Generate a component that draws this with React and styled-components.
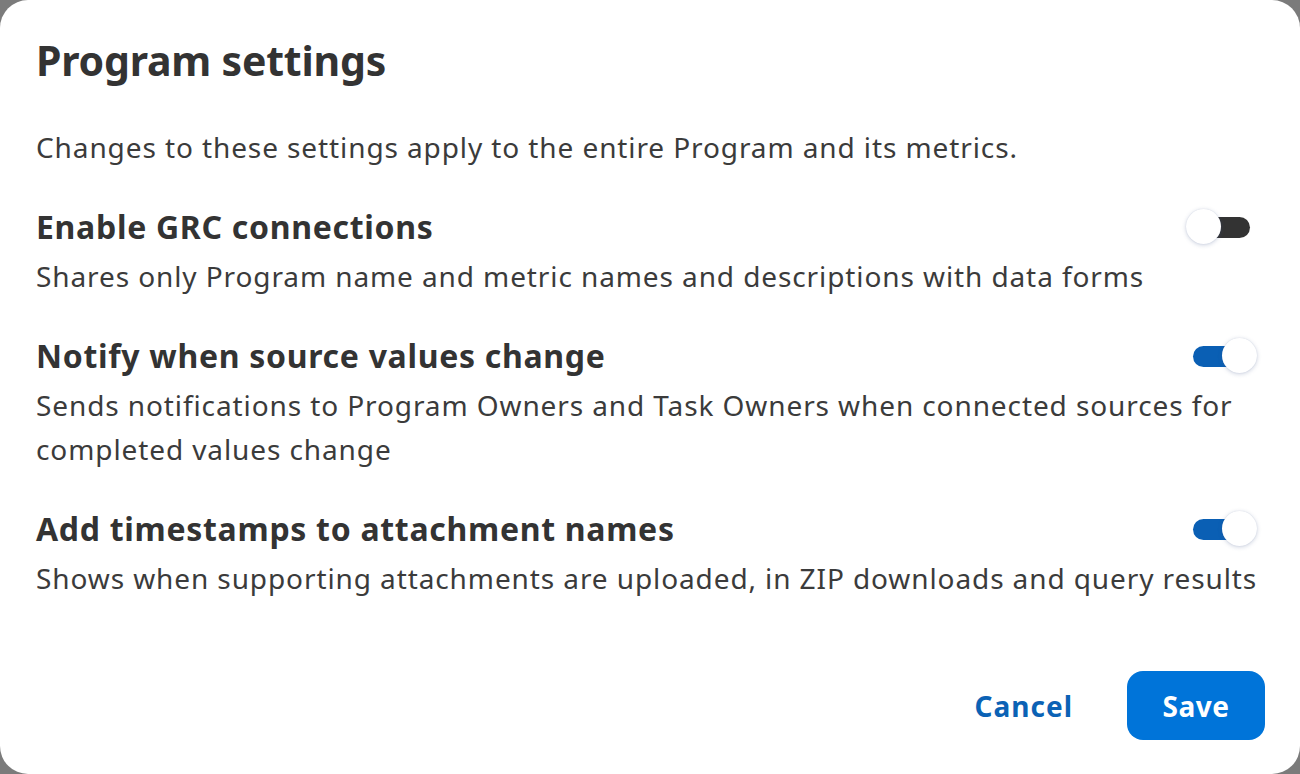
import React, { useState } from "react";
import styled, { createGlobalStyle } from "styled-components";

const Global = createGlobalStyle`
  html, body { margin: 0; padding: 0; background: #7b7b7b; }
  body { font-family: "Noto Sans", "Liberation Sans", sans-serif; -webkit-font-smoothing: antialiased; }
  * { box-sizing: border-box; }
`;

const Card = styled.div`
  width: 1300px;
  height: 774px;
  background: #ffffff;
  border-radius: 28px;
  padding: 32px 35px 34px 36px;
  display: flex;
  flex-direction: column;
  color: #3b3b3b;
`;

const Title = styled.h1`
  margin: 0 0 37px;
  font-size: 41px;
  line-height: 56px;
  font-weight: 700;
  color: #333333;
  letter-spacing: -0.2px;
`;

const Body = styled.p`
  margin: 0;
  font-size: 28px;
  line-height: 44px;
  font-weight: 400;
  letter-spacing: 0.9px;
  color: #3b3b3b;
`;

const Intro = styled(Body)`
  margin-bottom: 38px;
`;

const Setting = styled.div`
  display: grid;
  grid-template-columns: 1fr auto;
  column-gap: 16px;
  row-gap: 7px;
  margin-bottom: 38px;
  &:last-of-type { margin-bottom: 0; }
`;

const Heading = styled.h2`
  margin: 0;
  font-size: 32px;
  line-height: 40px;
  font-weight: 700;
  letter-spacing: 0.7px;
  color: #333333;
`;

const Desc = styled(Body)`
  grid-column: 1 / -1;
`;

const SwitchButton = styled.button`
  position: relative;
  align-self: center;
  width: 64px;
  height: 36px;
  padding: 0;
  border: 0;
  background: transparent;
  cursor: pointer;
  margin-right: ${(p) => (p.$on ? "8px" : "15px")};
`;

const Track = styled.span`
  position: absolute;
  top: 8px;
  height: 21px;
  width: 46px;
  border-radius: 11px;
  background: ${(p) => (p.$on ? "#0a5fb4" : "#333333")};
  ${(p) => (p.$on ? "left: 0;" : "right: 0;")}
`;

const Knob = styled.span`
  position: absolute;
  top: 0;
  width: 35px;
  height: 35px;
  border-radius: 50%;
  background: #ffffff;
  box-shadow: 0 1px 4px rgba(70, 90, 140, 0.28), 0 0 1px rgba(70, 90, 140, 0.2);
  ${(p) => (p.$on ? "right: 0;" : "left: 0;")}
`;

function Switch({ on, onToggle }) {
  return (
    <SwitchButton $on={on} role="switch" aria-checked={on} onClick={onToggle}>
      <Track $on={on} />
      <Knob $on={on} />
    </SwitchButton>
  );
}

const Footer = styled.div`
  margin-top: auto;
  display: flex;
  justify-content: flex-end;
  align-items: center;
  gap: 46px;
`;

const TextButton = styled.button`
  border: 0;
  background: transparent;
  font-family: inherit;
  font-size: 28px;
  font-weight: 700;
  letter-spacing: 1px;
  color: #0b62b5;
  padding: 0 8px;
  cursor: pointer;
`;

const PrimaryButton = styled.button`
  border: 0;
  width: 138px;
  height: 69px;
  border-radius: 16px;
  background: #0074d9;
  color: #ffffff;
  font-family: inherit;
  font-size: 28px;
  font-weight: 700;
  letter-spacing: 0.5px;
  cursor: pointer;
`;

const settings = [
  {
    title: "Enable GRC connections",
    desc: "Shares only Program name and metric names and descriptions with data forms",
    on: false,
  },
  {
    title: "Notify when source values change",
    desc: "Sends notifications to Program Owners and Task Owners when connected sources for completed values change",
    on: true,
  },
  {
    title: "Add timestamps to attachment names",
    desc: "Shows when supporting attachments are uploaded, in ZIP downloads and query results",
    on: true,
  },
];

export default function App() {
  const [state, setState] = useState(settings.map((s) => s.on));
  return (
    <>
      <Global />
      <Card>
        <Title>Program settings</Title>
        <Intro>Changes to these settings apply to the entire Program and its metrics.</Intro>
        {settings.map((s, i) => (
          <Setting key={s.title}>
            <Heading>{s.title}</Heading>
            <Switch
              on={state[i]}
              onToggle={() => setState((st) => st.map((v, j) => (j === i ? !v : v)))}
            />
            <Desc>{s.desc}</Desc>
          </Setting>
        ))}
        <Footer>
          <TextButton>Cancel</TextButton>
          <PrimaryButton>Save</PrimaryButton>
        </Footer>
      </Card>
    </>
  );
}
